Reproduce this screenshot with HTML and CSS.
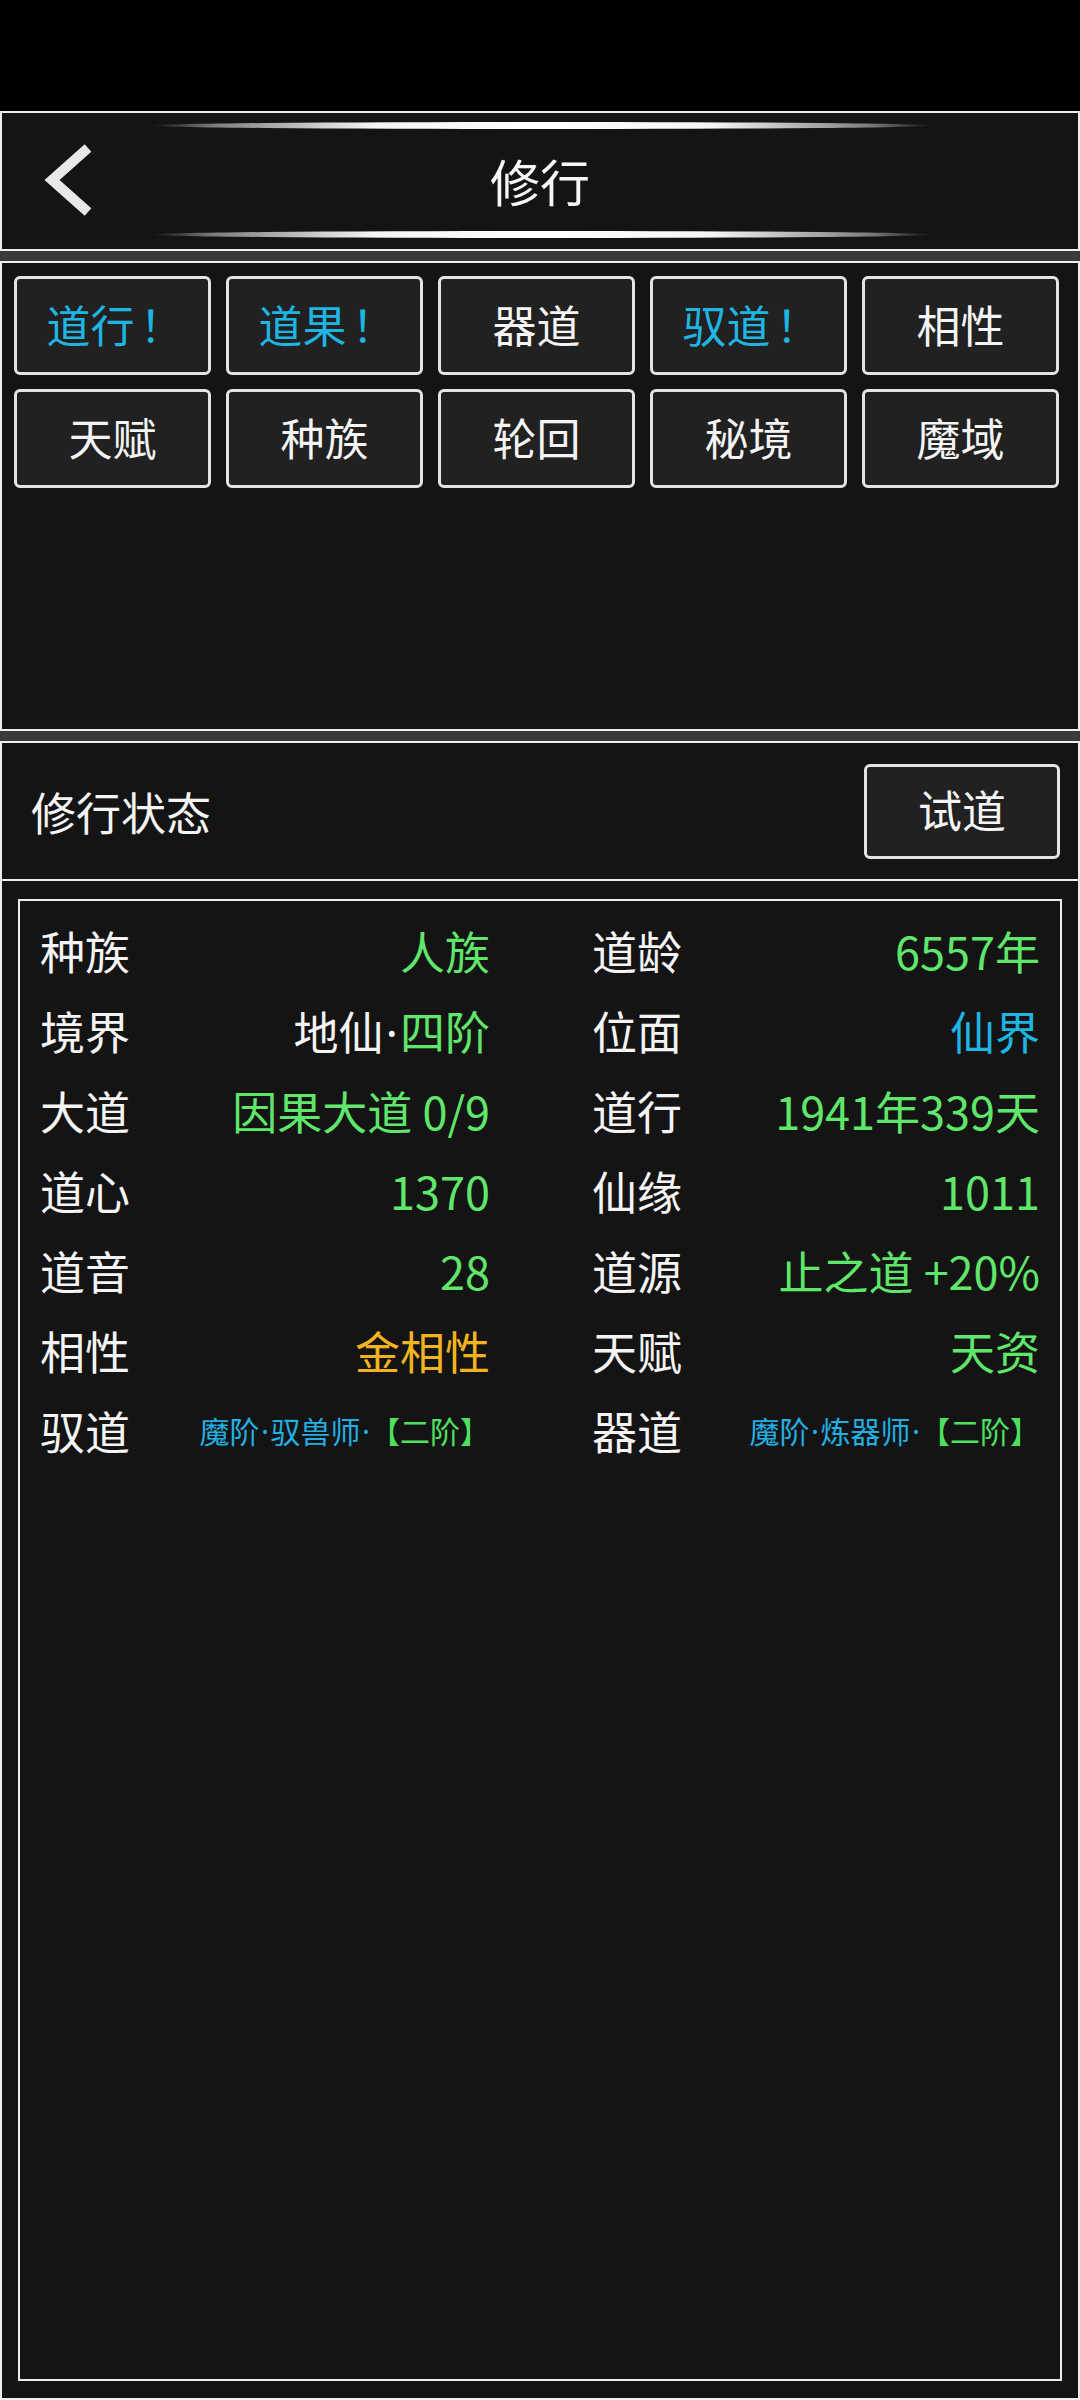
FILE: index.html
```html
<!DOCTYPE html>
<html lang="zh-CN">
<head>
<meta charset="utf-8">
<title>修行</title>
<link rel="stylesheet" href="styles.css">
</head>
<body>
<div class="statusbar"></div>
<main class="page">
  <header class="panel header">
    <div class="deco"></div>
    <div class="titlebar">
      <div class="back">
        <svg width="60" height="80" viewBox="0 0 60 80"><polyline points="50,8 14,40 50,72" fill="none" stroke="#e8e8e8" stroke-width="10" stroke-linejoin="miter" stroke-linecap="butt"/></svg>
      </div>
      <h1 class="title">修行</h1>
      <div></div>
    </div>
    <div class="deco"></div>
  </header>
  <div class="strip"></div>
  <section class="panel menu">
    <div class="btn cyan">道行<span class="excl">！</span></div>
    <div class="btn cyan">道果<span class="excl">！</span></div>
    <div class="btn">器道</div>
    <div class="btn cyan">驭道<span class="excl">！</span></div>
    <div class="btn">相性</div>
    <div class="btn">天赋</div>
    <div class="btn">种族</div>
    <div class="btn">轮回</div>
    <div class="btn">秘境</div>
    <div class="btn">魔域</div>
  </section>
  <div class="strip"></div>
  <section class="panel status-head">
    <div class="status-title">修行状态</div>
    <div class="btn try">试道</div>
  </section>
  <section class="panel status-body">
    <div class="stats">
      <div class="cell"><span class="lbl">种族</span><span class="val green">人族</span></div>
      <div class="cell"><span class="lbl">道龄</span><span class="val green">6557年</span></div>
      <div class="cell"><span class="lbl">境界</span><span class="val"><span class="white">地仙<span class="dot">·</span></span><span class="green">四阶</span></span></div>
      <div class="cell"><span class="lbl">位面</span><span class="val cyan">仙界</span></div>
      <div class="cell"><span class="lbl">大道</span><span class="val green">因果大道 0/9</span></div>
      <div class="cell"><span class="lbl">道行</span><span class="val green">1941年339天</span></div>
      <div class="cell"><span class="lbl">道心</span><span class="val green">1370</span></div>
      <div class="cell"><span class="lbl">仙缘</span><span class="val green">1011</span></div>
      <div class="cell"><span class="lbl">道音</span><span class="val green">28</span></div>
      <div class="cell"><span class="lbl">道源</span><span class="val green">止之道 +20%</span></div>
      <div class="cell"><span class="lbl">相性</span><span class="val gold">金相性</span></div>
      <div class="cell"><span class="lbl">天赋</span><span class="val green">天资</span></div>
      <div class="cell"><span class="lbl">驭道</span><span class="val small"><span class="cyan2">魔阶<span class="dot">·</span>驭兽师<span class="dot">·</span></span><span class="green2"><span class="lb">【</span>二阶】</span></span></div>
      <div class="cell"><span class="lbl">器道</span><span class="val small"><span class="cyan2">魔阶<span class="dot">·</span>炼器师<span class="dot">·</span></span><span class="green2"><span class="lb">【</span>二阶】</span></span></div>
    </div>
  </section>
</main>
</body>
</html>
```
FILE: styles.css
```css
* { box-sizing: border-box; }
html, body {
  margin: 0;
  padding: 0;
  background: #000;
}
body {
  width: 1080px;
  height: 2400px;
  overflow: hidden;
  font-family: "Noto Sans CJK SC", "Noto Sans", sans-serif;
  color: #f2f2f2;
}
.statusbar {
  height: 111px;
  background: #000;
}
.page {
  background: #141414;
}
.panel {
  background: #141414;
  border: 2px solid #eeeeee;
  width: 1080px;
}
.strip {
  height: 10px;
  background: #3a3a3a;
}

/* header */
.header {
  height: 140px;
  display: flex;
  flex-direction: column;
  justify-content: space-between;
  padding: 9px 0 11px;
}
.deco {
  width: 780px;
  height: 7px;
  margin-left: 150px;
  border-radius: 50%;
  background: linear-gradient(90deg,
    rgba(255,255,255,0) 0%,
    rgba(170,170,170,0.7) 8%,
    #f4f4f4 28%,
    #ffffff 50%,
    #f4f4f4 72%,
    rgba(170,170,170,0.7) 92%,
    rgba(255,255,255,0) 100%);
}
.titlebar {
  display: grid;
  grid-template-columns: 1fr auto 1fr;
  align-items: center;
  height: 80px;
}
.back {
  padding-left: 36px;
  display: flex;
  align-items: center;
}
.back svg { display: block; }
.title {
  margin: 0;
  font-size: 50px;
  font-weight: 400;
  line-height: 80px;
  color: #f6f6f6;
}

/* menu buttons */
.menu {
  height: 470px;
  padding: 13px 0 0 12px;
  display: grid;
  grid-template-columns: repeat(5, 197px);
  grid-auto-rows: 99px;
  column-gap: 15px;
  row-gap: 14px;
  align-content: start;
}
.btn {
  background: #212121;
  border: 3px solid #e4e4e4;
  border-radius: 6px;
  display: flex;
  align-items: center;
  justify-content: center;
  padding-bottom: 4px;
  font-size: 44px;
  color: #f4f4f4;
  line-height: 1;
}
.btn.cyan { color: #1fb5e2; }
.excl {
  display: inline-block;
  width: 1em;
  text-align: center;
  padding-left: 0.12em;
}

/* status header */
.status-head {
  height: 140px;
  display: flex;
  align-items: center;
  justify-content: space-between;
  padding: 0 18px 0 29px;
}
.status-title {
  font-size: 45px;
  color: #f4f4f4;
}
.btn.try {
  width: 196px;
  height: 95px;
  font-size: 44px;
}

/* status body */
.status-body {
  border-top: none;
  height: 1519px;
  padding: 18px 16px 17px;
}
.stats {
  height: 1482px;
  border: 2px solid #eeeeee;
  padding: 9px 20px 0;
  display: grid;
  grid-template-columns: 450px 448px;
  column-gap: 102px;
  grid-auto-rows: 80px;
  align-content: start;
}
.cell {
  display: flex;
  align-items: center;
  justify-content: space-between;
  font-size: 45px;
  white-space: nowrap;
}
.lbl { color: #f4f4f4; }
.val { text-align: right; }
.val.small { font-size: 30px; }
.lb { padding-left: 0.45em; }
.dot {
  font-family: "Noto Sans", "DejaVu Sans", sans-serif;
  padding: 0 0.05em;
}
.green { color: #5fe66b; }
.white { color: #f4f4f4; }
.cyan { color: #1fb5e2; }
.gold { color: #f2b320; }
.cyan2 { color: #22aee0; }
.green2 { color: #4ee05e; }
```
